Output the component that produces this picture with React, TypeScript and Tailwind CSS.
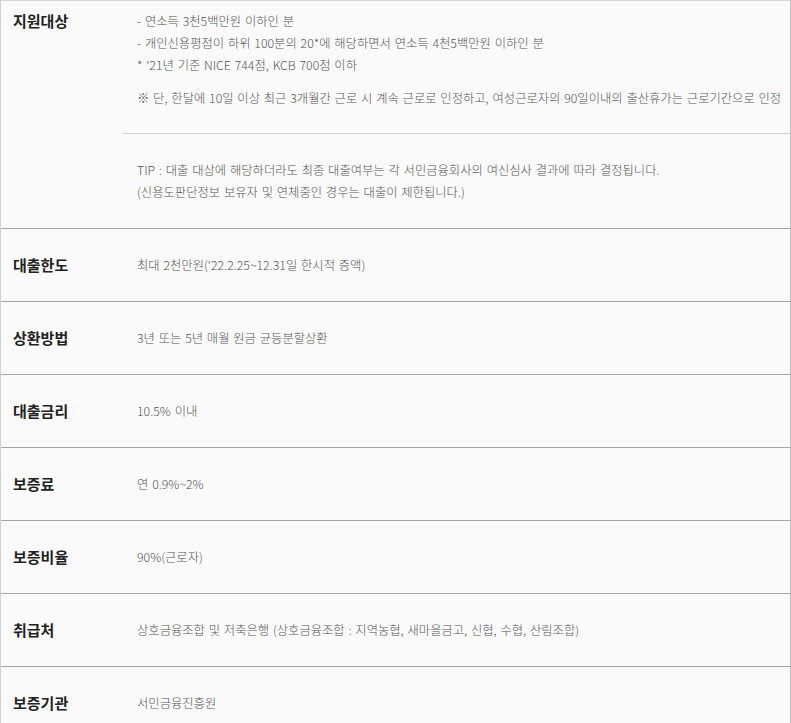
const rows: { label: string; value: string }[] = [
  { label: "대출한도", value: "최대 2천만원('22.2.25~12.31일 한시적 증액)" },
  { label: "상환방법", value: "3년 또는 5년 매월 원금 균등분할상환" },
  { label: "대출금리", value: "10.5% 이내" },
  { label: "보증료", value: "연 0.9%~2%" },
  { label: "보증비율", value: "90%(근로자)" },
  { label: "취급처", value: "상호금융조합 및 저축은행 (상호금융조합 : 지역농협, 새마을금고, 신협, 수협, 산림조합)" },
];

export default function App() {
  return (
    <div
      className="w-[791px] h-[723px] overflow-hidden bg-[#fafafa] text-[#555]"
      style={{ fontFamily: '"Noto Sans CJK KR", "Noto Sans", sans-serif' }}
    >
      <div className="border-t border-l border-r border-t-[#d6d6d6] border-l-[#cfcfcf] border-r-[#bdbdbd]">
        {/* 지원대상 */}
        <div className="flex h-[228px] border-b border-[#a5a5a5]">
          <div className="w-[136px] shrink-0 pl-3 pt-[9px] text-[15px] font-bold leading-[22px] text-[#222]">
            지원대상
          </div>
          <div className="flex-1 pt-[9px] text-[12.3px] font-light leading-[22px] [word-spacing:1.1px]">
            <p>- 연소득 3천5백만원 이하인 분</p>
            <p>- 개인신용평점이 하위 100분의 20*에 해당하면서 연소득 4천5백만원 이하인 분</p>
            <p>* '21년 기준 NICE 744점, KCB 700점 이하</p>
            <p className="mt-[11px] whitespace-nowrap">
              ※ 단, 한달에 10일 이상 최근 3개월간 근로 시 계속 근로로 인정하고, 여성근로자의 90일이내의 출산휴가는 근로기간으로 인정
            </p>
            <div className="-ml-[14px] mt-[24px] border-t border-[#d2d2d2]" />
            <p className="mt-[25px]">TIP : 대출 대상에 해당하더라도 최종 대출여부는 각 서민금융회사의 여신심사 결과에 따라 결정됩니다.</p>
            <p>(신용도판단정보 보유자 및 연체중인 경우는 대출이 제한됩니다.)</p>
          </div>
        </div>

        {rows.map((r) => (
          <div key={r.label} className="flex h-[73px] items-center border-b border-[#a5a5a5]">
            <div className="w-[136px] shrink-0 pl-3 text-[15px] font-bold leading-[20px] text-[#222]">{r.label}</div>
            <div className="flex-1 text-[12.3px] font-light leading-[20px] [word-spacing:1.1px]">{r.value}</div>
          </div>
        ))}

        <div className="flex h-[57px] items-start border-b border-[#a5a5a5] pt-[26px]">
          <div className="w-[136px] shrink-0 pl-3 text-[15px] font-bold leading-[20px] text-[#222]">보증기관</div>
          <div className="flex-1 text-[12.3px] font-light leading-[20px] [word-spacing:1.1px]">서민금융진흥원</div>
        </div>
      </div>
    </div>
  );
}
